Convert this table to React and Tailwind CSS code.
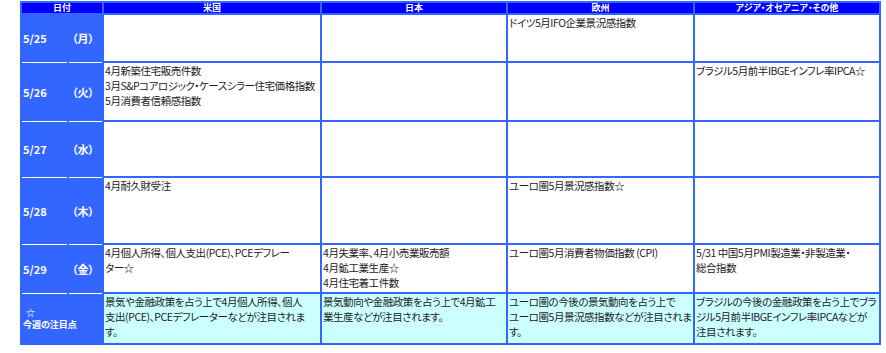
const font = {
  fontFamily: '"Noto Sans CJK JP", "Noto Sans", sans-serif',
};

const rows = [
  {
    date: "5/25",
    day: "（月）",
    us: [],
    jp: [],
    eu: ["ドイツ5月IFO企業景況感指数"],
    asia: [],
  },
  {
    date: "5/26",
    day: "（火）",
    us: ["4月新築住宅販売件数", "3月S&Pコアロジック・ケースシラー住宅価格指数", "5月消費者信頼感指数"],
    jp: [],
    eu: [],
    asia: ["ブラジル5月前半IBGEインフレ率IPCA☆"],
  },
  {
    date: "5/27",
    day: "（水）",
    us: [],
    jp: [],
    eu: [],
    asia: [],
  },
  {
    date: "5/28",
    day: "（木）",
    us: ["4月耐久財受注"],
    jp: [],
    eu: ["ユーロ圏5月景況感指数☆"],
    asia: [],
  },
  {
    date: "5/29",
    day: "（金）",
    us: ["4月個人所得、個人支出(PCE)、PCEデフレー", "ター☆"],
    jp: ["4月失業率、4月小売業販売額", "4月鉱工業生産☆", "4月住宅着工件数"],
    eu: ["ユーロ圏5月消費者物価指数 (CPI)"],
    asia: ["5/31 中国5月PMI製造業・非製造業・", "総合指数"],
  },
];

const notes = {
  us: ["景気や金融政策を占う上で4月個人所得、個人", "支出(PCE)、PCEデフレーターなどが注目されま", "す。"],
  jp: ["景気動向や金融政策を占う上で4月鉱工", "業生産などが注目されます。"],
  eu: ["ユーロ圏の今後の景気動向を占う上で", "ユーロ圏5月景況感指数などが注目されま", "す。"],
  asia: ["ブラジルの今後の金融政策を占う上でブラ", "ジル5月前半IBGEインフレ率IPCAなどが", "注目されます。"],
};

function Cell({ lines, note }) {
  return (
    <div
      className={`${note ? "bg-[#ccffff]" : "bg-white"} pl-[1px] text-[10.5px] leading-[15px] tracking-[-0.45px] text-[#222] whitespace-nowrap overflow-hidden [font-feature-settings:"palt"]`}
    >
      {lines.map((l, i) => (
        <div key={i}>{l}</div>
      ))}
    </div>
  );
}

function Head({ children, span }) {
  return (
    <div
      className={`${span ? "col-span-2" : ""} bg-[#0000ff] flex items-center justify-center text-[9px] leading-[10px] font-bold text-white [font-feature-settings:"palt"]`}
    >
      {children}
    </div>
  );
}

export default function App() {
  return (
    <div className="bg-white w-[886px] h-[353px] pt-[1px] pl-[20px]" style={font}>
      <div className="w-fit grid grid-cols-[45px_33px_216px_184px_185px_184px] grid-rows-[10px_46px_57px_54px_65px_47px_49px] gap-[2px] p-[2px] bg-[#3366ff]">
        <Head span>日付</Head>
        <Head>米国</Head>
        <Head>日本</Head>
        <Head>欧州</Head>
        <Head>アジア・オセアニア・その他</Head>

        {rows.map((r) => (
          <div key={r.date} className="contents">
            <div className="mb-[-2px] border-b border-white flex items-center pl-[1px] text-[11px] font-bold text-white">
              {r.date}
            </div>
            <div className="mb-[-2px] border-b border-white flex items-center pl-[3px] text-[11px] font-bold text-white [font-feature-settings:'palt']">
              {r.day}
            </div>
            <Cell lines={r.us} />
            <Cell lines={r.jp} />
            <Cell lines={r.eu} />
            <Cell lines={r.asia} />
          </div>
        ))}

        <div className="col-span-2 flex flex-col justify-center pl-[1px] text-[9px] leading-[12px] font-bold text-white [font-feature-settings:'palt']">
          <div className="pl-[3px]">☆</div>
          <div>今週の注目点</div>
        </div>
        <Cell lines={notes.us} note />
        <Cell lines={notes.jp} note />
        <Cell lines={notes.eu} note />
        <Cell lines={notes.asia} note />
      </div>
    </div>
  );
}
